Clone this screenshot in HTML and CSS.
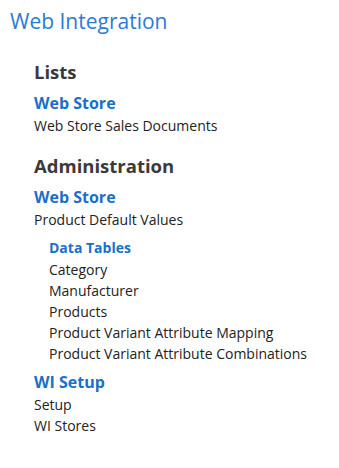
FILE: index.html
```html
<!DOCTYPE html>
<html lang="en">
<head>
    <meta charset="UTF-8">
    <title>Web Integration</title>
    <link rel="stylesheet" href="styles.css">
</head>
<body>
    <h1 class="page-title">Web Integration</h1>
    <div class="menu">
        <h2 class="group-title">Lists</h2>
        <h3 class="section-title">Web Store</h3>
        <ul class="links">
            <li><a href="#">Web Store Sales Documents</a></li>
        </ul>

        <h2 class="group-title admin">Administration</h2>
        <h3 class="section-title">Web Store</h3>
        <ul class="links">
            <li><a href="#">Product Default Values</a></li>
        </ul>
        <div class="sub">
            <h4 class="sub-title">Data Tables</h4>
            <ul class="links">
                <li><a href="#">Category</a></li>
                <li><a href="#">Manufacturer</a></li>
                <li><a href="#">Products</a></li>
                <li><a href="#">Product Variant Attribute Mapping</a></li>
                <li><a href="#">Product Variant Attribute Combinations</a></li>
            </ul>
        </div>
        <h3 class="section-title">WI Setup</h3>
        <ul class="links">
            <li><a href="#">Setup</a></li>
            <li><a href="#">WI Stores</a></li>
        </ul>
    </div>
</body>
</html>
```
FILE: styles.css
```css
body{
    margin: 0;
    padding: 7px 10px;
    font-family: "Open Sans", "Noto Sans", sans-serif;
    color: #222;
    background: #fff;
}
ul{
    margin: 0;
    padding: 0;
    list-style: none;
}
a{
    color: #222;
    text-decoration: none;
}
.page-title{
    margin: 0;
    font-size: 21px;
    font-weight: 400;
    line-height: 28px;
    color: #2b7bd3;
}
.menu{
    padding: 25px 0 0 24px;
}
.group-title{
    margin: 0;
    font-size: 18.5px;
    font-weight: 700;
    line-height: 24px;
    color: #3a3a3a;
}
.group-title.admin{
    margin-top: 18px;
}
.section-title{
    margin: 8px 0 1px;
    font-size: 16px;
    font-weight: 700;
    line-height: 22px;
    color: #1a6fc8;
}
.sub + .section-title{
    margin-top: 7px;
}
.links li{
    font-size: 14px;
    line-height: 21px;
}
.sub{
    padding: 8px 0 0 15px;
}
.sub-title{
    margin: 0 0 1px;
    font-size: 14px;
    font-weight: 700;
    line-height: 20px;
    color: #1a6fc8;
}
```
